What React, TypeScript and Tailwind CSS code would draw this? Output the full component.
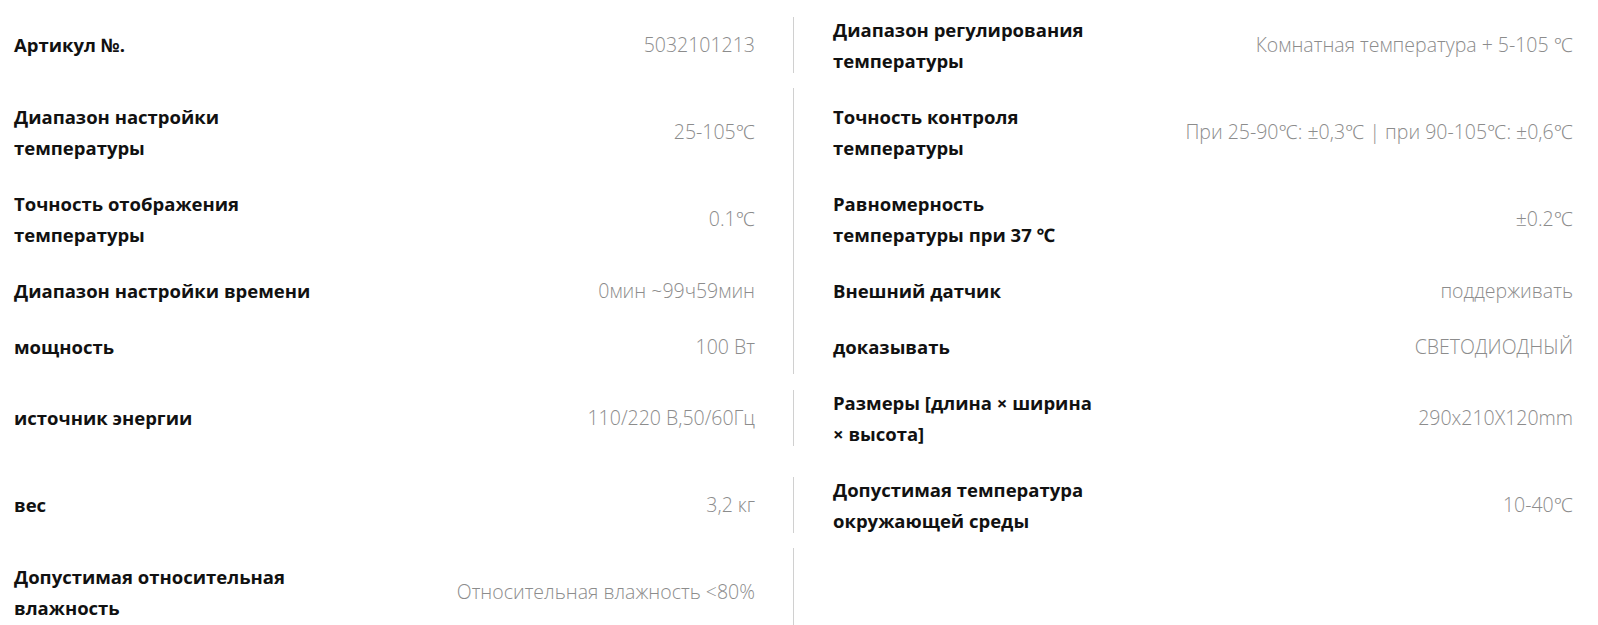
import React from 'react';

type Spec = { label: string[]; value: string };

const rows: [Spec, Spec | null][] = [
  [
    { label: ['Артикул №.'], value: '5032101213' },
    { label: ['Диапазон регулирования', 'температуры'], value: 'Комнатная температура + 5-105 ℃' },
  ],
  [
    { label: ['Диапазон настройки', 'температуры'], value: '25-105℃' },
    { label: ['Точность контроля', 'температуры'], value: 'При 25-90℃: ±0,3℃ | при 90-105℃: ±0,6℃' },
  ],
  [
    { label: ['Точность отображения', 'температуры'], value: '0.1℃' },
    { label: ['Равномерность', 'температуры при 37 ℃'], value: '±0.2℃' },
  ],
  [
    { label: ['Диапазон настройки времени'], value: '0мин ~99ч59мин' },
    { label: ['Внешний датчик'], value: 'поддерживать' },
  ],
  [
    { label: ['мощность'], value: '100 Вт' },
    { label: ['доказывать'], value: 'СВЕТОДИОДНЫЙ' },
  ],
  [
    { label: ['источник энергии'], value: '110/220 В,50/60Гц' },
    { label: ['Размеры [длина × ширина', '× высота]'], value: '290x210X120mm' },
  ],
  [
    { label: ['вес'], value: '3,2 кг' },
    { label: ['Допустимая температура', 'окружающей среды'], value: '10-40℃' },
  ],
  [
    { label: ['Допустимая относительная', 'влажность'], value: 'Относительная влажность <80%' },
    null,
  ],
];

const Cell: React.FC<{ spec: Spec }> = ({ spec }) => (
  <>
    <div className="font-bold text-[18.5px] text-[#111]">
      {spec.label.map((l) => (
        <div key={l} className="whitespace-nowrap">{l}</div>
      ))}
    </div>
    <div className="font-light text-[19.5px] text-[#8c8c8c] whitespace-nowrap">{spec.value}</div>
  </>
);

const App: React.FC = () => {
  return (
    <div className="min-h-screen bg-white pt-[1px] font-['Open_Sans','Noto_Sans',sans-serif] leading-[31px]">
      {rows.map(([left, right], i) => (
        <div key={i} className="flex items-center">
          <div className="w-[794px] shrink-0 flex items-center justify-between py-[12.5px] pl-[14px] pr-[38px] border-r border-[#d0d0d0]">
            <Cell spec={left} />
          </div>
          <div className="flex-1 flex items-center justify-between py-[12.5px] pl-[39px] pr-[25px]">
            {right && <Cell spec={right} />}
          </div>
        </div>
      ))}
    </div>
  );
};

export default App;
